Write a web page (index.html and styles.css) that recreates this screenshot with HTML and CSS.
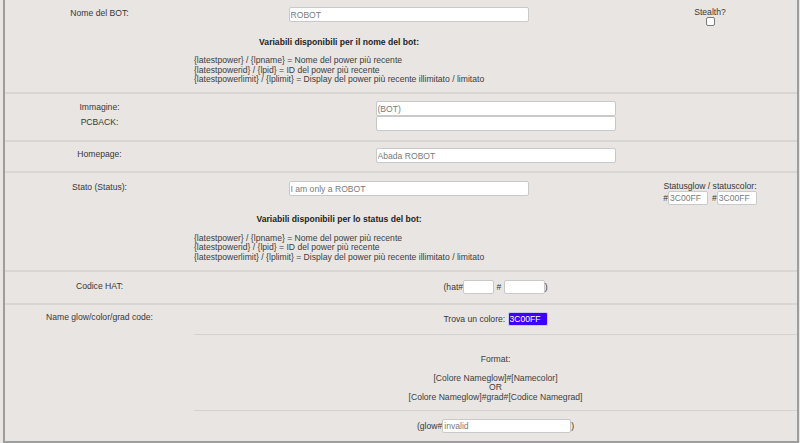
FILE: index.html
```html
<!DOCTYPE html>
<html lang="it">
<head>
<meta charset="utf-8">
<title>Bot</title>
<link rel="stylesheet" href="styles.css">
</head>
<body>
<div class="panel">
  <section class="sec tri s1">
    <div class="lbl">Nome del BOT:</div>
    <div class="cell"><input class="txt w240" type="text" value="ROBOT"></div>
    <div class="side">
      <div class="cap">Stealth?</div>
      <input class="chk" type="checkbox">
    </div>
    <div class="vars v1">
      <div class="vbox">
        <div class="vhead">Variabili disponibili per il nome del bot:</div>
        <div>{latestpower} / {lpname} = Nome del power più recente</div>
        <div>{latestpowerid} / {lpid} = ID del power più recente</div>
        <div>{latestpowerlimit} / {lplimit} = Display del power più recente illimitato / limitato</div>
      </div>
    </div>
  </section>

  <section class="sec duo s2">
    <div class="lbl">Immagine:</div>
    <div class="cell"><input class="txt w240" type="text" value="(BOT)"></div>
    <div class="lbl">PCBACK:</div>
    <div class="cell"><input class="txt w240" type="text" value=""></div>
  </section>

  <section class="sec duo s3">
    <div class="lbl">Homepage:</div>
    <div class="cell"><input class="txt w240" type="text" value="Abada ROBOT"></div>
  </section>

  <section class="sec tri s4">
    <div class="lbl">Stato (Status):</div>
    <div class="cell"><input class="txt w240" type="text" value="I am only a ROBOT"></div>
    <div class="side">
      <div class="cap">Statusglow / statuscolor:</div>
      <div class="inl">#<input class="txt sm w40" type="text" value="3C00FF"><span class="hash2">#</span><input class="txt sm w40" type="text" value="3C00FF"></div>
    </div>
    <div class="vars v4">
      <div class="vbox">
        <div class="vhead">Variabili disponibili per lo status del bot:</div>
        <div>{latestpower} / {lpname} = Nome del power più recente</div>
        <div>{latestpowerid} / {lpid} = ID del power più recente</div>
        <div>{latestpowerlimit} / {lplimit} = Display del power più recente illimitato / limitato</div>
      </div>
    </div>
  </section>

  <section class="sec duo s5">
    <div class="lbl">Codice HAT:</div>
    <div class="inl">(hat#<input class="txt sm w31" type="text" value=""> # <input class="txt sm w41" type="text" value="">)</div>
  </section>

  <section class="sec duo s6">
    <div class="lbl lbl-top">Name glow/color/grad code:</div>
    <div class="subs">
      <div class="sub sub-a inl">Trova un colore: <input class="txt sm w40 picked" type="text" value="3C00FF"></div>
      <div class="sub sub-b">
        <div>Format:</div>
        <div>&nbsp;</div>
        <div>[Colore Nameglow]#[Namecolor]</div>
        <div>OR</div>
        <div>[Colore Nameglow]#grad#[Codice Namegrad]</div>
      </div>
      <div class="sub sub-c inl">(glow#<input class="txt sm w128" type="text" value="invalid">)</div>
    </div>
  </section>
</div>
</body>
</html>
```

FILE: styles.css
```css
html, body {
  margin: 0;
  padding: 0;
}

body {
  background: #e8e5e2;
  font-family: "Liberation Sans", Arial, sans-serif;
  font-size: 8.6px;
  color: #383838;
  overflow: hidden;
}

.panel {
  margin-left: 3px;
  width: 792px;
  border: 2px solid #9d9d9d;
  border-top: none;
  background: #e8e5e2;
}

.sec {
  border-top: 2px solid #d9d5d2;
}

.sec:first-child {
  border-top: none;
}

.tri {
  display: grid;
  grid-template-columns: 189px 429px 1fr;
  align-items: start;
}

.duo {
  display: grid;
  grid-template-columns: 189px 1fr;
  align-items: start;
}

.lbl {
  text-align: center;
  line-height: 12px;
}

.lbl-top {
  padding-top: 7px;
  line-height: 10px;
}

.cell {
  text-align: center;
  height: 15px;
}

.side {
  text-align: center;
}

.cap {
  line-height: 10px;
}

.txt {
  box-sizing: border-box;
  height: 15px;
  margin: 0;
  padding: 0 1px;
  border: 1px solid #c9c9c9;
  border-radius: 2px;
  background: #fff;
  font-family: "Liberation Sans", Arial, sans-serif;
  font-size: 8.6px;
  color: #7b7b7b;
  outline: none;
}

.w240 {
  display: block;
  width: 240px;
  margin: 0 auto;
}

.sm {
  height: 14px;
  display: inline-block;
  vertical-align: top;
}

.w31 { width: 31px; }
.w40 { width: 40px; }
.w41 { width: 41px; }
.w128 { width: 129px; }

.hash2 {
  margin-left: 4px;
}

.picked {
  background: #3c00ff;
  color: #fff;
  border-color: #c9c9f0;
}

.inl {
  text-align: center;
  line-height: 14px;
  height: 14px;
  white-space: nowrap;
}

.chk {
  -webkit-appearance: none;
  appearance: none;
  display: block;
  width: 9px;
  height: 9px;
  margin: 0 auto;
  border: 1px solid #7a7a7a;
  border-radius: 2px;
  background: #fff;
}

.vars {
  grid-column: 2 / 4;
}

.vbox {
  display: inline-block;
  line-height: 9.5px;
  color: #404040;
}

.vhead {
  font-weight: bold;
  text-align: center;
  line-height: 10px;
  margin-bottom: 9.25px;
  color: #1f1f1f;
}

.s1 { padding: 7px 0 7.5px; }
.v1 { padding-top: 11px; }

.s2 {
  padding: 7px 0 9px;
  grid-auto-rows: 15px;
}

.s3 { padding: 6px 0 8px; }

.s4 { padding: 8px 0 8.25px; }
.v4 { padding-top: 9px; }

.s5 { padding: 8px 0 9px; }

.subs {
  display: flex;
  flex-direction: column;
}

.sub + .sub {
  border-top: 1px solid #d6d2cf;
}

.sub-a { padding: 7px 0 8px; box-sizing: content-box; }

.sub-b {
  padding: 19.25px 0 8px;
  text-align: center;
  line-height: 9.5px;
  color: #404040;
}

.sub-c { padding: 8px 0 8px; box-sizing: content-box; }
```
